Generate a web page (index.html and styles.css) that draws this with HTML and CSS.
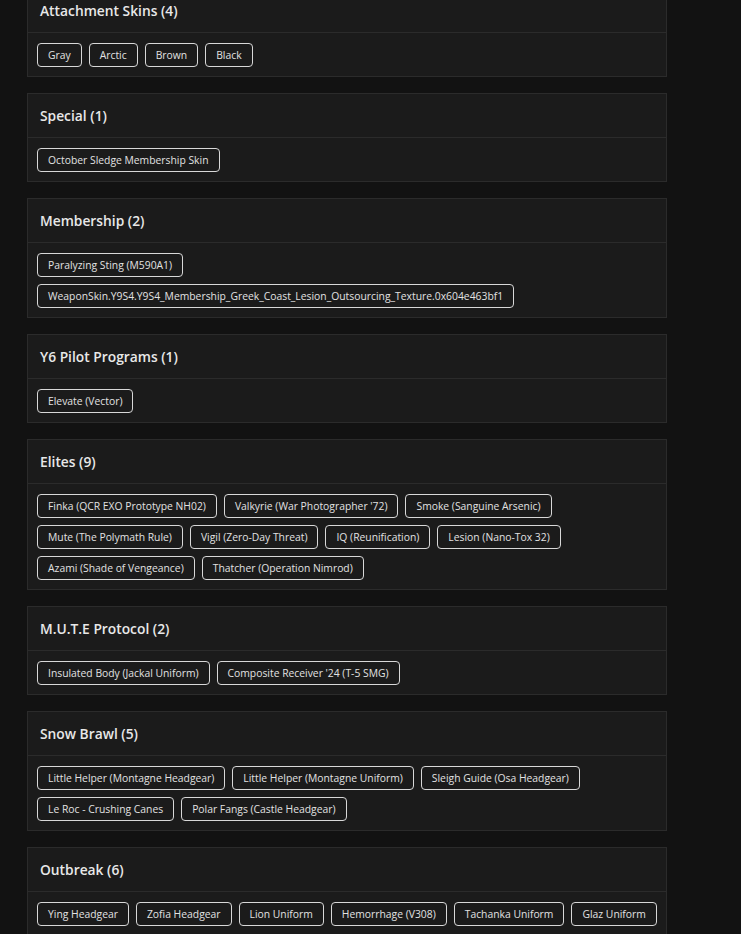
FILE: index.html
```html
<!DOCTYPE html>
<html lang="en">
<head>
<meta charset="utf-8">
<title>Skins</title>
<link rel="stylesheet" href="styles.css">
</head>
<body>
<main class="list">
  <section class="card">
    <h2 class="card-head">Attachment Skins (4)</h2>
    <div class="card-body">
      <span class="chip">Gray</span><span class="chip">Arctic</span><span class="chip">Brown</span><span class="chip">Black</span>
    </div>
  </section>
  <section class="card">
    <h2 class="card-head">Special (1)</h2>
    <div class="card-body">
      <span class="chip">October Sledge Membership Skin</span>
    </div>
  </section>
  <section class="card">
    <h2 class="card-head">Membership (2)</h2>
    <div class="card-body">
      <span class="chip">Paralyzing Sting (M590A1)</span>
      <span class="chip">WeaponSkin.Y9S4.Y9S4_Membership_Greek_Coast_Lesion_Outsourcing_Texture.0x604e463bf1</span>
    </div>
  </section>
  <section class="card">
    <h2 class="card-head">Y6 Pilot Programs (1)</h2>
    <div class="card-body">
      <span class="chip">Elevate (Vector)</span>
    </div>
  </section>
  <section class="card">
    <h2 class="card-head">Elites (9)</h2>
    <div class="card-body">
      <span class="chip">Finka (QCR EXO Prototype NH02)</span>
      <span class="chip">Valkyrie (War Photographer '72)</span>
      <span class="chip">Smoke (Sanguine Arsenic)</span>
      <span class="chip">Mute (The Polymath Rule)</span>
      <span class="chip">Vigil (Zero-Day Threat)</span>
      <span class="chip">IQ (Reunification)</span>
      <span class="chip">Lesion (Nano-Tox 32)</span>
      <span class="chip">Azami (Shade of Vengeance)</span>
      <span class="chip">Thatcher (Operation Nimrod)</span>
    </div>
  </section>
  <section class="card">
    <h2 class="card-head">M.U.T.E Protocol (2)</h2>
    <div class="card-body">
      <span class="chip">Insulated Body (Jackal Uniform)</span>
      <span class="chip">Composite Receiver '24 (T-5 SMG)</span>
    </div>
  </section>
  <section class="card">
    <h2 class="card-head">Snow Brawl (5)</h2>
    <div class="card-body">
      <span class="chip">Little Helper (Montagne Headgear)</span>
      <span class="chip">Little Helper (Montagne Uniform)</span>
      <span class="chip">Sleigh Guide (Osa Headgear)</span>
      <span class="chip">Le Roc - Crushing Canes</span>
      <span class="chip">Polar Fangs (Castle Headgear)</span>
    </div>
  </section>
  <section class="card">
    <h2 class="card-head">Outbreak (6)</h2>
    <div class="card-body">
      <span class="chip">Ying Headgear</span>
      <span class="chip">Zofia Headgear</span>
      <span class="chip">Lion Uniform</span>
      <span class="chip">Hemorrhage (V308)</span>
      <span class="chip">Tachanka Uniform</span>
      <span class="chip">Glaz Uniform</span>
    </div>
  </section>
</main>
</body>
</html>
```

FILE: styles.css
```css
html, body {
  margin: 0;
  padding: 0;
  background: #121212;
  height: 100%;
  overflow: hidden;
}
body {
  font-family: "Open Sans", "Liberation Sans", sans-serif;
  color: #e6e6e6;
}
.list {
  display: flex;
  flex-direction: column;
  gap: 16px;
  width: 640px;
  margin: -12px 0 0 27px;
}
.card {
  background: #1b1b1b;
  border: 1px solid #2b2b2b;
}
.card-head {
  margin: 0;
  height: 43px;
  display: flex;
  align-items: center;
  padding: 0 12px;
  font-size: 13.8px;
  font-weight: 600;
  color: #e8e8e8;
  border-bottom: 1px solid #2b2b2b;
}
.card-body {
  display: flex;
  flex-wrap: wrap;
  gap: 7px 7px;
  padding: 9.5px 9px;
}
.chip {
  box-sizing: border-box;
  height: 24px;
  display: inline-flex;
  align-items: center;
  padding: 0 10px;
  border: 1px solid #d8d8d8;
  border-radius: 4px;
  font-size: 10.35px;
  color: #e2e2e2;
  white-space: nowrap;
}
```
